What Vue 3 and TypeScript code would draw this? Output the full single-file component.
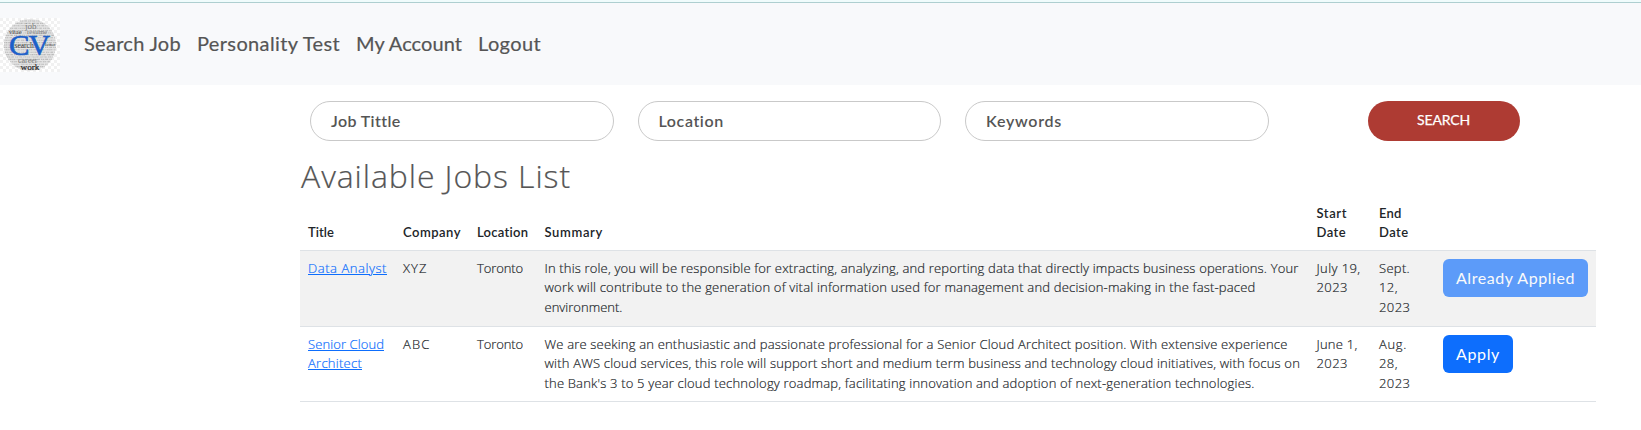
<script setup lang="ts">
interface Line { text: string; width: number }
interface Job {
  title: Line[]
  company: Line
  location: Line
  summary: Line[]
  start: Line[]
  end: Line[]
  action: Line
  applied: boolean
}

const line = (text: string, width: number): Line => ({ text, width })

// Tracks a run of text so that it fills the given width.
const vFit = {
  mounted(el: HTMLElement, binding: { value: number }) {
    const count = (el.textContent ?? '').length
    const natural = el.getBoundingClientRect().width
    el.style.letterSpacing = `${(binding.value - natural) / count}px`
  },
}

const nav = [line('Search Job', 97), line('Personality Test', 143), line('My Account', 106), line('Logout', 63)]
const fields = [line('Job Tittle', 69), line('Location', 65.5), line('Keywords', 76)]
const heads: Line[][] = [
  [line('Title', 26)],
  [line('Company', 58)],
  [line('Location', 51.5)],
  [line('Summary', 58.5)],
  [line('Start', 30.5), line('Date', 29.5)],
  [line('End', 22.5), line('Date', 29.5)],
  [],
]
const jobs: Job[] = [
  {
    title: [line('Data Analyst', 79)],
    company: line('XYZ', 24.5),
    location: line('Toronto', 46),
    summary: [
      line('In this role, you will be responsible for extracting, analyzing, and reporting data that directly impacts business operations. Your', 754),
      line('work will contribute to the generation of vital information used for management and decision-making in the fast-paced', 711),
      line('environment.', 78),
    ],
    start: [line('July 19,', 44), line('2023', 31.5)],
    end: [line('Sept.', 31), line('12,', 19), line('2023', 31.5)],
    action: line('Already Applied', 119),
    applied: true,
  },
  {
    title: [line('Senior Cloud', 76), line('Architect', 54)],
    company: line('ABC', 27.5),
    location: line('Toronto', 46),
    summary: [
      line('We are seeking an enthusiastic and passionate professional for a Senior Cloud Architect position. With extensive experience', 743),
      line('with AWS cloud services, this role will support short and medium term business and technology cloud initiatives, with focus on', 755.5),
      line("the Bank's 3 to 5 year cloud technology roadmap, facilitating innovation and adoption of next-generation technologies.", 710),
    ],
    start: [line('June 1,', 41), line('2023', 31.5)],
    end: [line('Aug.', 28), line('28,', 19), line('2023', 31.5)],
    action: line('Apply', 44),
    applied: false,
  },
]

// Rows of fine print in the logo, as centre x, y and length of each stroke.
const strokes: [number, number, number][] = []
for (let y = 3; y < 52; y += 2.4) {
  strokes.push([30, y, 2 * Math.sqrt(Math.max(0, 26 * 26 - (y - 27) ** 2))])
}
</script>

<template>
  <div class="page">
    <header class="navbar">
      <svg class="logo" width="60" height="54" viewBox="0 0 60 54">
        <defs>
          <pattern id="checks" width="6" height="6" patternUnits="userSpaceOnUse">
            <rect width="6" height="6" fill="#fff" />
            <path d="M0 0h3v3H0zM3 3h3v3H3z" fill="#f1f1f1" />
          </pattern>
        </defs>
        <rect width="60" height="54" fill="url(#checks)" />
        <circle cx="30" cy="27" r="26" fill="#dcdcdc" opacity=".7" />
        <g fill="none" stroke="#8f8f8f" stroke-width="1.1" stroke-dasharray="1 .5 1.6 .7 .8 .4 2 1.2">
          <path v-for="s in strokes" :key="s[1]" :d="`M${s[0] - s[2] / 2} ${s[1]}h${s[2]}`" opacity=".5" />
        </g>
        <g class="words">
          <text x="25" y="11" font-size="9">job</text>
          <text x="9" y="16.3" font-size="6.5" class="dark">vitae</text>
          <text x="27" y="16" font-size="7">resume</text>
          <text x="14.5" y="30" font-size="7.5" class="dark">search</text>
          <text x="45" y="28" font-size="5" class="dark">letter</text>
          <text x="18" y="45" font-size="8">career</text>
        </g>
        <g class="initials">
          <text x="9" y="37.2" font-size="30" textLength="20.5" lengthAdjust="spacingAndGlyphs">C</text>
          <text x="28.5" y="37.2" font-size="30" textLength="21.5" lengthAdjust="spacingAndGlyphs">V</text>
        </g>
        <text class="work" x="20.5" y="51.5" textLength="19" lengthAdjust="spacingAndGlyphs">work</text>
      </svg>
      <nav>
        <a v-for="n in nav" :key="n.text"><span v-fit="n.width">{{ n.text }}</span></a>
      </nav>
    </header>

    <main>
      <form class="search" @submit.prevent>
        <div v-for="f in fields" :key="f.text" class="field"><span v-fit="f.width">{{ f.text }}</span></div>
        <button class="go"><span v-fit="53">SEARCH</span></button>
      </form>

      <h2><span v-fit="270">Available Jobs List</span></h2>

      <table>
        <colgroup><col v-for="i in 7" :key="i" :class="'c' + i"></colgroup>
        <thead>
          <tr>
            <th v-for="(h, i) in heads" :key="i">
              <div v-for="l in h" :key="l.text"><span v-fit="l.width">{{ l.text }}</span></div>
            </th>
          </tr>
        </thead>
        <tbody>
          <tr v-for="j in jobs" :key="j.company.text">
            <td><div v-for="l in j.title" :key="l.text"><span v-fit="l.width" class="link">{{ l.text }}</span></div></td>
            <td><span v-fit="j.company.width">{{ j.company.text }}</span></td>
            <td><span v-fit="j.location.width">{{ j.location.text }}</span></td>
            <td><div v-for="l in j.summary" :key="l.text"><span v-fit="l.width">{{ l.text }}</span></div></td>
            <td><div v-for="l in j.start" :key="l.text"><span v-fit="l.width">{{ l.text }}</span></div></td>
            <td><div v-for="l in j.end" :key="l.text"><span v-fit="l.width">{{ l.text }}</span></div></td>
            <td><button class="btn" :disabled="j.applied"><span v-fit="j.action.width">{{ j.action.text }}</span></button></td>
          </tr>
        </tbody>
      </table>
    </main>
  </div>
</template>

<style>
body { background: #fff; }
</style>

<style scoped>
.page {
  box-sizing: border-box;
  height: 430px;
  overflow: hidden;
  border-top: 2px solid #f0fcfc;
  font-family: Lato, "Open Sans", sans-serif;
  color: #212529;
}
.page span { white-space: nowrap; }
.navbar {
  box-sizing: border-box;
  display: flex;
  align-items: center;
  height: 83px;
  padding-bottom: 1px;
  border-top: 1px solid #aecfd0;
  background: #f8f9fb;
}
.logo { display: block; margin-top: 3px; }
.words { font-family: "Liberation Serif", serif; fill: #808080; }
.words .dark { fill: #3c3c3c; }
.initials { font-family: "Liberation Serif", serif; fill: #1c5fc9; stroke: #1c5fc9; stroke-width: .7; }
.work { font: 9px "Liberation Serif", serif; fill: #222; stroke: #222; stroke-width: .15; }
nav {
  display: flex;
  gap: 16px;
  margin-left: 24px;
  padding-bottom: 1px;
  font-size: 20px;
  line-height: 30px;
  color: #555;
  -webkit-text-stroke: .2px #555;
}
main { padding: 16px 45px 0 300px; }
.search { display: flex; gap: 24px; padding-left: 10px; }
.field {
  box-sizing: border-box;
  width: 303.5px;
  height: 40px;
  padding: 0 20px;
  border: 1px solid #c9c9c9;
  border-radius: 20px;
  font-size: 16px;
  line-height: 37px;
  font-weight: 600;
  color: #555;
}
button { border: 0; font-family: Lato, sans-serif; color: #fff; }
.go {
  width: 152px;
  height: 40px;
  margin-left: 75px;
  padding: 0 0 3px;
  border-radius: 20px;
  background: #ae3b33;
  font-size: 14px;
  -webkit-text-stroke: .25px #fff;
}
h2 {
  margin: 16px 0 0 1px;
  font: 300 32px/38.5px "Open Sans", sans-serif;
  color: #555;
  -webkit-text-stroke: .2px #555;
}
table {
  width: 1296px;
  margin-top: -1px;
  border-collapse: collapse;
  table-layout: fixed;
  font: 300 13px/19.5px "Open Sans", sans-serif;
  -webkit-text-stroke: .18px;
}
.c1 { width: 95px; }
.c2 { width: 74px; }
.c3 { width: 67.5px; }
.c4 { width: 772px; }
.c5 { width: 62.5px; }
.c6 { width: 64px; }
.c7 { width: 161px; }
th, td { padding: 8px; border-bottom: 1px solid #dee2e6; text-align: left; vertical-align: top; }
th {
  padding: 9px 8px 7px;
  vertical-align: bottom;
  font-family: Lato, sans-serif;
  font-weight: 600;
  -webkit-text-stroke: 0;
}
tbody tr { height: 75px; }
tbody tr:nth-child(odd) { height: 76px; background: #f2f2f2; }
.link { color: #0d6efd; text-decoration: underline; }
.btn {
  display: block;
  height: 38px;
  padding: 0 13px;
  border-radius: 6px;
  background: #0d6efd;
  font-size: 16px;
  line-height: 24px;
  -webkit-text-stroke: 0;
}
.btn:disabled { opacity: .65; }
</style>
